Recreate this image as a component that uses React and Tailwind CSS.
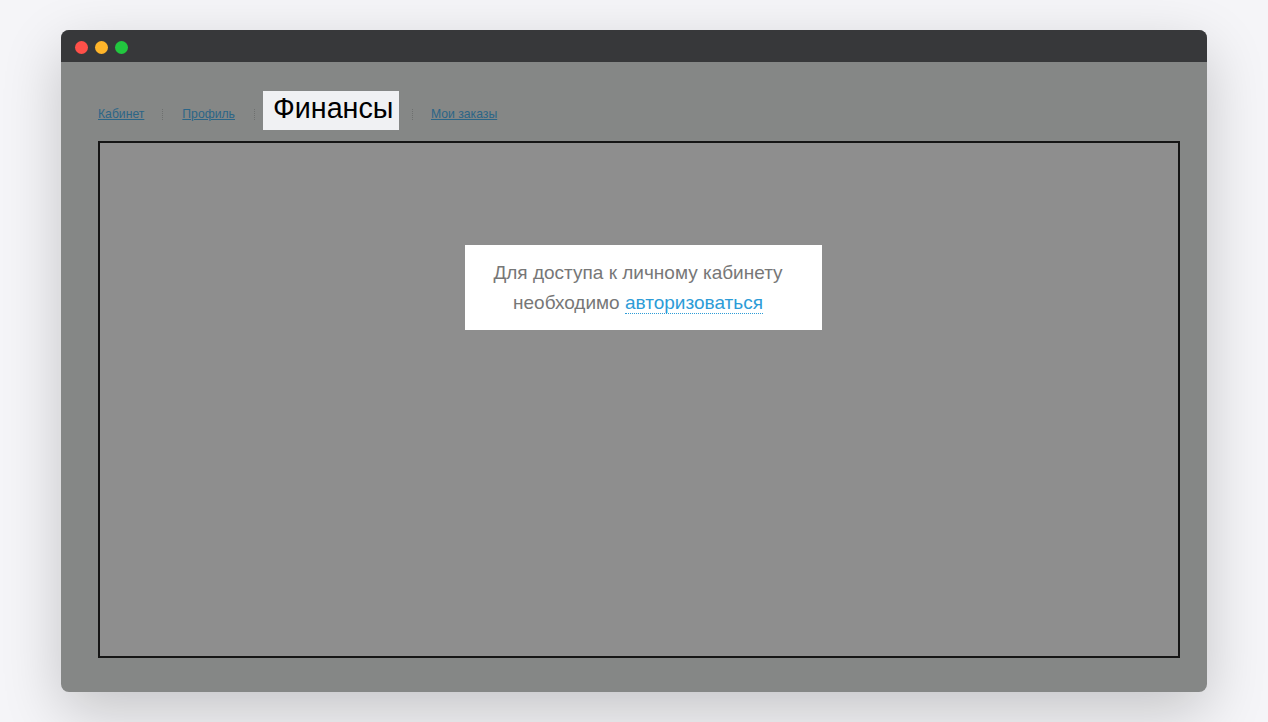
export default function App() {
  return (
    <div className="h-[722px] overflow-hidden bg-[#f5f5f8] pt-[30px] pl-[61px] font-['Liberation_Sans',Arial,sans-serif]">
      <div className="w-[1146px] h-[662px] rounded-lg overflow-hidden bg-[#858786] shadow-[0_20px_60px_rgba(0,0,0,0.2)] flex flex-col">
        {/* title bar */}
        <div className="h-8 shrink-0 bg-[#37383a] flex items-center gap-[7px] pl-[14px] pt-[2px]">
          <span className="w-[13px] h-[13px] rounded-full bg-[#ff5049]"></span>
          <span className="w-[13px] h-[13px] rounded-full bg-[#ffb52a]"></span>
          <span className="w-[13px] h-[13px] rounded-full bg-[#22c73f]"></span>
        </div>

        <div className="flex-1 flex flex-col pl-[37px] pr-[27px] pt-[29px] pb-[34px]">
          {/* tabs */}
          <div className="h-[39px] flex items-center text-[12.2px] text-[#2b6587]">
            <a className="underline mt-[8px]">Кабинет</a>
            <span className="w-px h-[11px] ml-[18px] mt-[8px] border-l border-dotted border-[#6e706f]"></span>
            <a className="underline ml-[19px] mt-[8px]">Профиль</a>
            <span className="w-px h-[11px] ml-[19px] mt-[8px] border-l border-dotted border-[#6e706f]"></span>
            <div className="ml-[8px] w-[136px] h-[39px] bg-[#f0f1f3] text-black text-[28.7px] leading-[34px] pl-[10px]">
              Финансы
            </div>
            <span className="w-px h-[11px] ml-[13px] mt-[8px] border-l border-dotted border-[#6e706f]"></span>
            <a className="underline ml-[18px] mt-[8px]">Мои заказы</a>
          </div>

          {/* panel */}
          <div className="mt-[11px] flex-1 border-2 border-[#151515] bg-[#8e8e8e] flex justify-center pt-[102px]">
            <div className="w-[357px] h-[85px] bg-white text-[19px] leading-[30px] text-[#777] text-center pt-[13px] pr-[10px] ml-[8px]">
              <p>Для доступа к личному кабинету</p>
              <p>
                необходимо{" "}
                <a className="text-[#2d9cd7] border-b border-dotted border-[#2d9cd7]">авторизоваться</a>
              </p>
            </div>
          </div>
        </div>
      </div>
    </div>
  );
}
